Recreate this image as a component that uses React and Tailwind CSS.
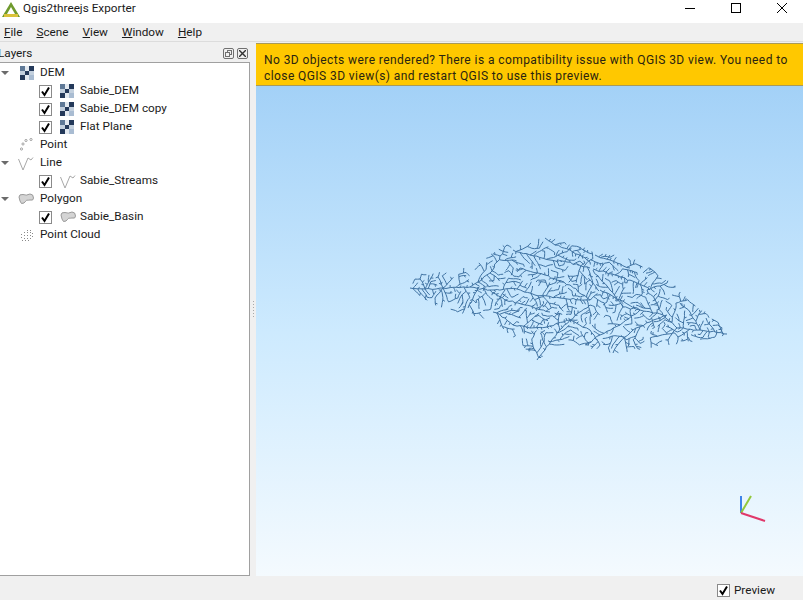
import React from "react";

function makeStreams() {
  let seed = 4711;
  const rnd = () => {
    seed = (seed * 16807) % 2147483647;
    return seed / 2147483647;
  };
  const rawStems = [
    [[410,288],[425,289],[443,288],[470,287],[478,282],[490,273],[497,262],[507,245]],
    [[470,287],[490,290],[517,289],[535,295],[560,298],[590,300]],
    [[537,360],[545,350],[557,333],[570,320],[590,305]],
    [[493,312],[505,318],[513,325],[530,328],[547,327],[570,320]],
    [[513,250],[530,255],[550,260],[567,262],[590,268]],
    [[545,238],[555,245],[570,250],[590,262]],
    [[727,334],[700,330],[677,328],[663,315],[640,310],[623,307],[610,290],[593,270]],
    [[663,315],[655,300],[647,290],[667,283]],
    [[593,269],[615,275],[637,283],[650,290]],
    [[667,315],[650,322],[633,330],[620,342],[613,353]],
    [[595,255],[610,260],[630,268]],
    [[640,310],[620,325],[600,335],[585,345]],
    [[600,290],[620,300],[640,310]],
    [[590,300],[570,285],[545,275],[520,268]],
    [[490,290],[505,300],[525,305],[550,312]],
    [[570,320],[590,330],[600,345]],
    [[700,330],[690,312],[680,303]],
    [[677,328],[668,340]],
    [[715,332],[706,318]],
    [[690,329],[678,337]],
    [[443,288],[435,298]],
    [[478,287],[468,308]],
    [[505,290],[495,306]],
    [[443,288],[438,277]],
    [[425,289],[420,279]],
  ];
  const stems = rawStems.map((st) => {
    const pts = [st[0]];
    for (let i = 0; i < st.length - 1; i++) {
      const [x1, y1] = st[i];
      const [x2, y2] = st[i + 1];
      const d = Math.hypot(x2 - x1, y2 - y1);
      const n = Math.max(1, Math.round(d / 3.5));
      for (let k = 1; k <= n; k++) {
        const j = k === n ? 0 : 1;
        pts.push([x1 + ((x2 - x1) * k) / n + (rnd() - 0.5) * 1.6 * j, y1 + ((y2 - y1) * k) / n + (rnd() - 0.5) * 1.6 * j]);
      }
    }
    return pts;
  });
  const outline = [[406,288],[418,274],[450,271],[480,262],[505,243],[525,245],[545,235],[575,245],[600,252],[640,260],[675,285],[695,305],[715,318],[731,335],[680,345],[640,350],[610,355],[570,342],[535,362],[522,345],[490,320],[445,310],[420,298]];
  const inside = (x, y) => {
    let c = false;
    for (let i = 0, j = outline.length - 1; i < outline.length; j = i++) {
      const [xi, yi] = outline[i];
      const [xj, yj] = outline[j];
      if (yi > y !== yj > y && x < ((xj - xi) * (y - yi)) / (yj - yi) + xi) c = !c;
    }
    return c;
  };
  const occ = new Set();
  const key = (x, y) => `${Math.round(x / 2.5)}:${Math.round(y / 2.5)}`;
  const mark = (x, y) => occ.add(key(x, y));
  for (const st of stems) {
    for (let i = 0; i < st.length - 1; i++) {
      const [x1, y1] = st[i];
      const [x2, y2] = st[i + 1];
      const d = Math.hypot(x2 - x1, y2 - y1);
      for (let t = 0; t <= d; t += 1.2) mark(x1 + ((x2 - x1) * t) / d, y1 + ((y2 - y1) * t) / d);
    }
  }
  const out = [];
  const grow = (x, y, a, len, depth) => {
    const pts = [[x, y]];
    let cx = x;
    let cy = y;
    let ca = a;
    const n = Math.ceil(len / 2.5);
    const pending = [];
    for (let i = 0; i < n; i++) {
      ca += (rnd() - 0.5) * 0.55;
      const nx = cx + Math.cos(ca) * 2.5;
      const ny = cy + Math.sin(ca) * 2.5;
      const fx = cx + Math.cos(ca) * 4;
      const fy = cy + Math.sin(ca) * 4;
      if (!inside(nx, ny) || occ.has(key(fx, fy))) break;
      cx = nx;
      cy = ny;
      mark(cx, cy);
      pts.push([cx, cy]);
      if (depth > 0 && i > 0 && rnd() < 0.55) {
        pending.push([cx, cy, ca + (rnd() < 0.5 ? -1 : 1) * (0.8 + rnd() * 0.5), len * (0.5 + rnd() * 0.3)]);
      }
    }
    if (pts.length > 1) out.push(pts);
    for (const [px, py, pa, pl] of pending) grow(px, py, pa, pl, depth - 1);
  };
  for (const st of stems) {
    out.push(st);
    for (let i = 0; i < st.length - 1; i++) {
      const [x1, y1] = st[i];
      const [x2, y2] = st[i + 1];
      const a = Math.atan2(y2 - y1, x2 - x1);
      const s = rnd() < 0.5 ? -1 : 1;
      grow(x2, y2, a + s * (0.8 + rnd() * 0.5), 8 + rnd() * 14, 3);
      if (rnd() < 0.5) grow(x2, y2, a - s * (0.8 + rnd() * 0.5), 8 + rnd() * 12, 2);
    }
  }
  return out.map((p) => p.map(([x, y]) => `${x.toFixed(1)},${y.toFixed(1)}`).join(" "));
}
const STREAMS = makeStreams();

const Chk = () => (
  <span className="flex h-[13px] w-[13px] shrink-0 items-center justify-center border border-[#8a8a8a] bg-white">
    <svg width="11" height="11" viewBox="0 0 11 11">
      <path d="M2 5.5 L4.5 9 L9 1.5" fill="none" stroke="#000" strokeWidth="2" />
    </svg>
  </span>
);

const Dem = () => (
  <svg width="14" height="14" viewBox="0 0 14 14" className="shrink-0">
    <rect width="14" height="14" fill="#e4eaf1" />
    <rect x="0" y="0" width="5" height="5" fill="#5f7997" />
    <rect x="9" y="0" width="5" height="5" fill="#24395a" />
    <rect x="0" y="5" width="5" height="4" fill="#c3d0de" />
    <rect x="5" y="5" width="4" height="4" fill="#24395a" />
    <rect x="9" y="5" width="5" height="4" fill="#c3d0de" />
    <rect x="0" y="9" width="5" height="5" fill="#24395a" />
    <rect x="9" y="9" width="5" height="5" fill="#a9bcd2" />
  </svg>
);
const PointIc = () => (
  <svg width="14" height="14" viewBox="0 0 14 14" className="shrink-0">
    {[[11,1.5],[6,2.5],[3,6],[1.5,11]].map(([x,y]) => (
      <circle key={x} cx={x} cy={y} r="1.1" fill="none" stroke="#8f8f8f" strokeWidth="0.8" />
    ))}
  </svg>
);
const LineIc = () => (
  <svg width="16" height="15" viewBox="0 0 16 15" className="shrink-0">
    <path d="M0.5 3 L5 14 L10 2 L13 4 L15 1.5" fill="none" stroke="#a8a8a8" strokeWidth="1" />
  </svg>
);
const PolyIc = () => (
  <svg width="16" height="13" viewBox="0 0 16 13" className="shrink-0">
    <path d="M1 4 Q1 1 5 1.5 Q8 3 12 1 Q15.5 1 15.5 5 Q15.5 8 12 7 Q8 6 6 10 Q3 12 2 8 Z" fill="#d4d4d4" stroke="#9a9a9a" strokeWidth="1" />
  </svg>
);
const CloudIc = () => (
  <svg width="14" height="14" viewBox="0 0 14 14" className="shrink-0">
    {[[7,2],[10,2],[4,4],[7,4],[10,4],[12,5],[1,6],[4,7],[7,7],[10,7],[12,8],[1,9],[4,10],[7,10],[10,10],[2,12],[5,12],[8,12]].map(([x,y]) => (
      <rect key={`${x}-${y}`} x={x} y={y} width="1" height="1" fill="#8a8a8a" />
    ))}
  </svg>
);

const Group = ({ arrow, icon, label, inset }) => (
  <div className="flex h-[18px] items-center">
    <span className="flex w-[18px] justify-start pl-[1px]">
      {arrow && <span className="h-0 w-0 border-x-[4px] border-t-[4px] border-x-transparent border-t-[#6b6b6b]" />}
    </span>
    <span className={inset ? "flex w-[22px] justify-start pl-[2px]" : "flex w-[22px] justify-start"}>{icon}</span>
    <span>{label}</span>
  </div>
);
const Child = ({ icon, label }) => (
  <div className="flex h-[18px] items-center pl-[39px]">
    <Chk />
    <span className="ml-[8px] flex w-[20px] justify-start">{icon}</span>
    <span>{label}</span>
  </div>
);

const Menu = ({ k, rest }) => (
  <span><u>{k}</u>{rest}</span>
);

export default function App() {
  return (
    <div className="flex h-[600px] w-[803px] flex-col overflow-hidden bg-[#f0f0f0] text-[11.75px] text-[#1a1a1a]" style={{ fontFamily: 'Roboto, sans-serif' }}>
      <div className="flex h-[23px] items-center bg-white">
        <svg width="18" height="16" viewBox="0 0 18 16" className="ml-[2px] mb-[3px] shrink-0">
          <path d="M9 0 L18 15 L0 15 Z" fill="#6f9a2d" />
          <path d="M9 5 L13 12 L5 12 Z" fill="#ffffff" />
          <rect x="2" y="12" width="14" height="3" fill="#d9c23a" />
        </svg>
        <span className="ml-[3px] mb-[5px] text-[11.75px] leading-none">Qgis2threejs Exporter</span>
        <div className="ml-auto mb-[7px] flex items-center">
          <span className="h-px w-[10px] bg-black" />
          <span className="ml-[36px] h-[10px] w-[10px] border border-black" />
          <svg width="10" height="10" viewBox="0 0 10 10" className="ml-[36px] mr-[16px]">
            <path d="M0 0 L10 10 M10 0 L0 10" stroke="#000" strokeWidth="1" />
          </svg>
        </div>
      </div>
      <div className="flex h-[19px] items-center gap-[14px] border-b border-[#dcdcdc] pl-[4px] pt-[2px]">
        <Menu k="F" rest="ile" />
        <Menu k="S" rest="cene" />
        <Menu k="V" rest="iew" />
        <Menu k="W" rest="indow" />
        <Menu k="H" rest="elp" />
      </div>
      <div className="flex h-[534px]">
        <div className="flex w-[250px] shrink-0 flex-col">
          <div className="flex h-[20px] items-center pt-[4px]">
            <span className="-ml-[2px]">Layers</span>
            <span className="ml-auto -mt-[2px] flex gap-[3px] pr-[2px]">
              <span className="relative h-[11px] w-[11px] rounded-[2px] border border-[#707070]">
                <span className="absolute left-[3px] top-[1px] h-[5px] w-[5px] border border-[#707070]" />
                <span className="absolute left-[1px] top-[3px] h-[5px] w-[5px] border border-[#707070] bg-[#f0f0f0]" />
              </span>
              <span className="flex h-[11px] w-[11px] items-center justify-center rounded-[2px] border border-[#707070]">
                <svg width="7" height="7" viewBox="0 0 7 7"><path d="M0 0 L7 7 M7 0 L0 7" stroke="#333" strokeWidth="1.4" /></svg>
              </span>
            </span>
          </div>
          <div className="flex-1 border border-l-0 border-[#a0a0a0] bg-white pt-[1px]">
            <Group arrow inset icon={<Dem />} label="DEM" />
            <Child icon={<Dem />} label="Sabie_DEM" />
            <Child icon={<Dem />} label="Sabie_DEM copy" />
            <Child icon={<Dem />} label="Flat Plane" />
            <Group inset icon={<PointIc />} label="Point" />
            <Group arrow icon={<LineIc />} label="Line" />
            <Child icon={<LineIc />} label="Sabie_Streams" />
            <Group arrow icon={<PolyIc />} label="Polygon" />
            <Child icon={<PolyIc />} label="Sabie_Basin" />
            <Group inset icon={<CloudIc />} label="Point Cloud" />
          </div>
        </div>
        <div className="flex w-[6px] shrink-0 flex-col items-center justify-center gap-[2px]">
          {[0,1,2,3,4,5].map((i) => <span key={i} className="h-px w-px bg-[#a8a8a8]" />)}
        </div>
        <div className="flex min-w-0 flex-1 flex-col">
          <div className="mt-px h-[43px] shrink-0 border-y border-[#a89a5a] bg-[#ffc800] pl-[8px] pt-[8px] text-[12px] leading-[16px] text-[#2a2410]">
            <div className="whitespace-nowrap tracking-[0.42px]">No 3D objects were rendered? There is a compatibility issue with QGIS 3D view. You need to</div>
            <div className="whitespace-nowrap tracking-[0.42px]">close QGIS 3D view(s) and restart QGIS to use this preview.</div>
          </div>
          <div className="relative flex-1 bg-gradient-to-b from-[#a3d1f7] via-[#cdeafe] to-[#f4fafe]">
            <svg width="547" height="491" viewBox="256 86 547 491" className="absolute left-0 top-0">
              {STREAMS.map((p, i) => (
                <polyline key={i} points={p} fill="none" stroke="#3f72a2" strokeWidth="1" />
              ))}
              <path d="M741 513 L741 496" stroke="#3d83ea" strokeWidth="2" />
              <path d="M741 513 L751 496" stroke="#93c83c" strokeWidth="2" />
              <path d="M741 513 L765 521" stroke="#e0386a" strokeWidth="2" />
            </svg>
          </div>
        </div>
      </div>
      <div className="flex h-[24px] items-center justify-end pr-[28px] pt-[5px]">
        <Chk />
        <span className="ml-[4px]">Preview</span>
      </div>
    </div>
  );
}
